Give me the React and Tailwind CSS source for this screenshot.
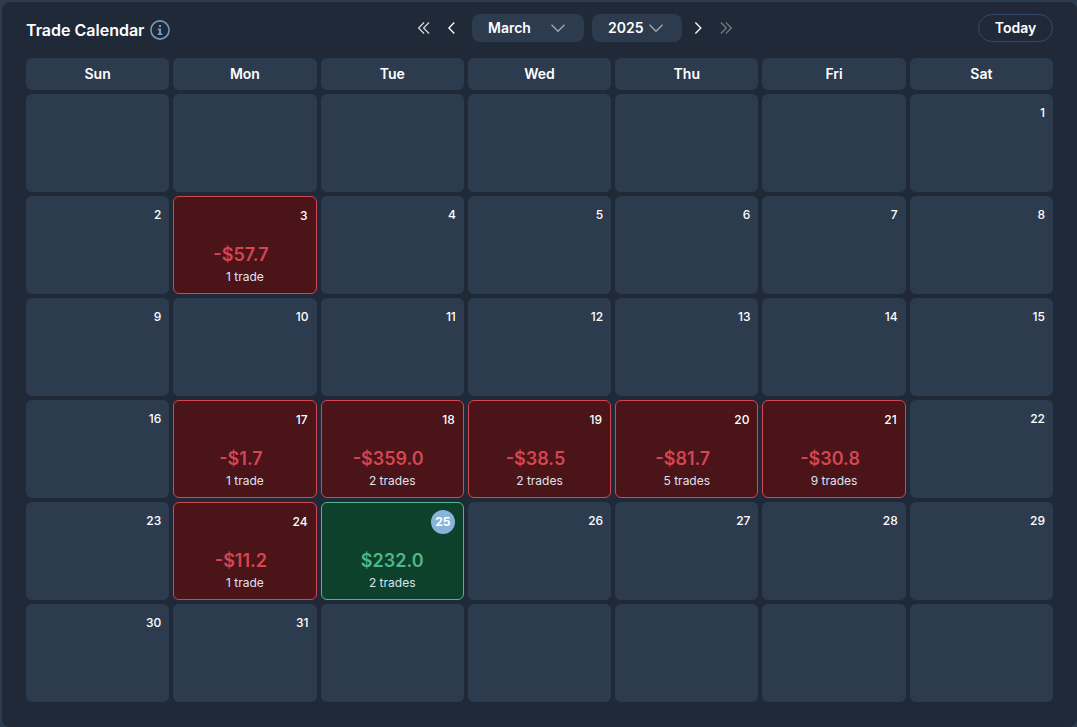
const DAYS = ["Sun", "Mon", "Tue", "Wed", "Thu", "Fri", "Sat"];

const TRADES = {
  3: { amount: "-$57.7", label: "1 trade" },
  17: { amount: "-$1.7", label: "1 trade" },
  18: { amount: "-$359.0", label: "2 trades" },
  19: { amount: "-$38.5", label: "2 trades" },
  20: { amount: "-$81.7", label: "5 trades" },
  21: { amount: "-$30.8", label: "9 trades" },
  24: { amount: "-$11.2", label: "1 trade" },
  25: { amount: "$232.0", label: "2 trades", win: true, today: true },
};

const CELLS = Array.from({ length: 42 }, (_, i) => {
  const day = i - 5;
  return day >= 1 && day <= 31 ? day : null;
});

function Arrow({ d, className }) {
  return (
    <svg
      width="16"
      height="16"
      viewBox="0 0 16 16"
      fill="none"
      stroke="currentColor"
      strokeWidth="1.3"
      className={className}
    >
      <path d={d} />
    </svg>
  );
}

function Select({ value, className }) {
  return (
    <button
      className={`flex h-7 items-center justify-between rounded-lg bg-[#2d3b4e] pl-4 text-sm font-semibold text-white ${className}`}
    >
      {value}
      <Arrow d="M1.5 4.8 8 11.3l6.5-6.5" className="text-[#a3abb6]" />
    </button>
  );
}

function DayCell({ day }) {
  const trade = TRADES[day];
  if (!trade) {
    return (
      <div className="h-[98px] rounded-md bg-[#2d3b4e] px-2 pt-[10px] text-right text-xs leading-[18px] font-medium text-white">
        {day}
      </div>
    );
  }
  return (
    <div
      className={`flex h-[98px] flex-col rounded-md border ${
        trade.win ? "border-[#4fb888] bg-[#0d412b]" : "border-[#d54552] bg-[#4a1418]"
      }`}
    >
      <div className="flex h-[38px] items-center justify-end px-2 text-xs font-medium text-white">
        {trade.today ? (
          <span className="flex size-6 items-center justify-center rounded-full bg-[#86b5d9] font-bold">
            {day}
          </span>
        ) : (
          day
        )}
      </div>
      <div
        className={`mt-[6px] text-center text-lg leading-7 font-semibold ${
          trade.win ? "text-[#4fb888]" : "pr-2 text-[#d54552]"
        }`}
      >
        {trade.amount}
      </div>
      <div className="text-center text-xs leading-4 text-[#dde3f0]">{trade.label}</div>
    </div>
  );
}

export default function App() {
  return (
    <div className="h-[727px] w-[1077px] overflow-hidden bg-[#2d3b4e] pt-[2px] pl-[2px] font-['Inter',sans-serif]">
      <div className="h-[725px] rounded-lg bg-[#202938] px-6 pt-3">
        <div className="flex h-11 items-start justify-between">
          <div className="flex h-8 w-36 items-center justify-between text-base font-semibold whitespace-nowrap text-white">
            Trade Calendar
            <svg width="20" height="20" viewBox="0 0 20 20" fill="none" className="shrink-0 text-[#7697bc]">
              <circle cx="10" cy="10" r="9.1" stroke="currentColor" strokeWidth="1.6" />
              <path d="M9 5h2v2H9zM7.8 8.5H11V13.3h1.3V15H7.7v-1.7H9v-3.1H7.8z" fill="currentColor" />
            </svg>
          </div>
          <div className="flex h-7 items-center text-white">
            <div className="flex w-[58px] gap-[11px] pl-[2px]">
              <Arrow d="m8 2.5-5.4 5.5 5.4 5.5M13 2.5 7.6 8l5.4 5.5" className="text-[#d0d4da]" />
              <Arrow d="M11.3 2.5 5.9 8l5.4 5.5" />
            </div>
            <Select value="March" className="w-28 pr-[18px]" />
            <Select value="2025" className="ml-2 w-[90px] pr-[18px]" />
            <div className="ml-2 flex gap-3">
              <Arrow d="m5.4 2.5 5.4 5.5-5.4 5.5" />
              <Arrow d="m2.9 2.5 5.4 5.5-5.4 5.5M7.9 2.5 13.3 8l-5.4 5.5" className="text-[#737b86]" />
            </div>
          </div>
          <button className="h-7 w-[75px] rounded-full border border-[#34496a] text-sm font-semibold text-white">
            Today
          </button>
        </div>
        <div className="grid grid-cols-7 gap-1">
          {DAYS.map((name) => (
            <div
              key={name}
              className="flex h-8 items-center justify-center rounded-md bg-[#2d3b4e] text-sm font-semibold text-white"
            >
              {name}
            </div>
          ))}
          {CELLS.map((day, i) => (
            <DayCell key={i} day={day} />
          ))}
        </div>
      </div>
    </div>
  );
}
